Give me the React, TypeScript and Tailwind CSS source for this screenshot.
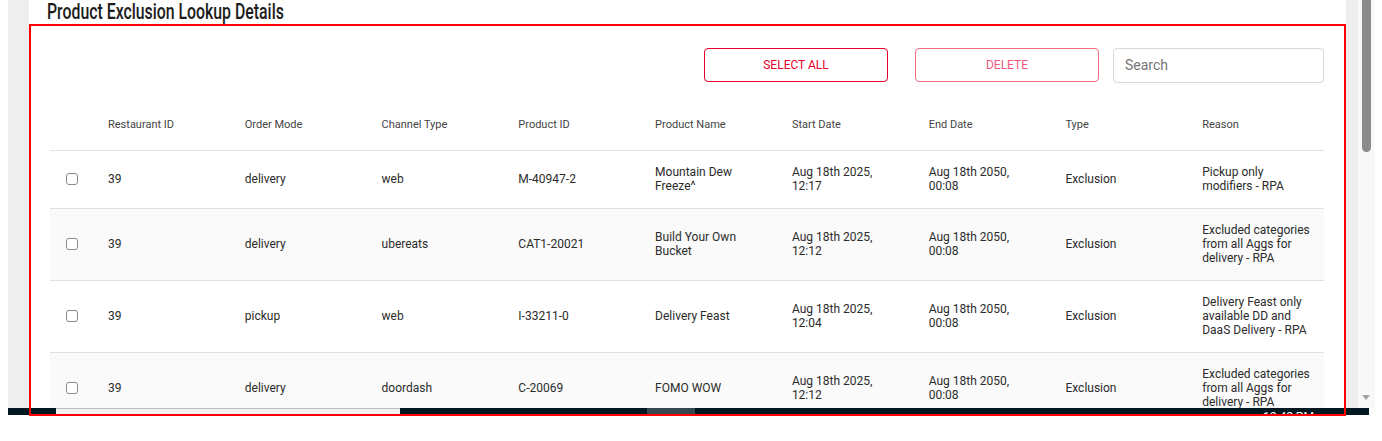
import React from "react";

type Row = {
  rid: string;
  mode: string;
  channel: string;
  pid: string;
  name: string;
  start: string;
  end: string;
  type: string;
  reason: string;
};

const rows: Row[] = [
  {
    rid: "39",
    mode: "delivery",
    channel: "web",
    pid: "M-40947-2",
    name: "Mountain Dew Freeze^",
    start: "Aug 18th 2025, 12:17",
    end: "Aug 18th 2050, 00:08",
    type: "Exclusion",
    reason: "Pickup only modifiers - RPA",
  },
  {
    rid: "39",
    mode: "delivery",
    channel: "ubereats",
    pid: "CAT1-20021",
    name: "Build Your Own Bucket",
    start: "Aug 18th 2025, 12:12",
    end: "Aug 18th 2050, 00:08",
    type: "Exclusion",
    reason: "Excluded categories from all Aggs for delivery - RPA",
  },
  {
    rid: "39",
    mode: "pickup",
    channel: "web",
    pid: "I-33211-0",
    name: "Delivery Feast",
    start: "Aug 18th 2025, 12:04",
    end: "Aug 18th 2050, 00:08",
    type: "Exclusion",
    reason: "Delivery Feast only available DD and DaaS Delivery - RPA",
  },
  {
    rid: "39",
    mode: "delivery",
    channel: "doordash",
    pid: "C-20069",
    name: "FOMO WOW",
    start: "Aug 18th 2025, 12:12",
    end: "Aug 18th 2050, 00:08",
    type: "Exclusion",
    reason: "Excluded categories from all Aggs for delivery - RPA",
  },
];

const headers = [
  "Restaurant ID",
  "Order Mode",
  "Channel Type",
  "Product ID",
  "Product Name",
  "Start Date",
  "End Date",
  "Type",
  "Reason",
];

function Cell({ children }: { children: React.ReactNode }) {
  return <div className="pl-[15px] pr-[14px] leading-[14px]">{children}</div>;
}

export default function App() {
  return (
    <div className="relative w-[1382px] h-[441px] bg-white overflow-hidden font-['Roboto',sans-serif] text-[12px]">
      <div className="flex h-[408px]">
        <div className="w-[8px] bg-white" />
        <div className="flex w-[1350px] bg-[#eeeeee] pl-[21px] pr-[12px]">
          <div className="flex w-[1317px] flex-col overflow-hidden bg-white">
            <div className="h-[24px] shrink-0 pl-[18px]">
              <div className="origin-left scale-x-[0.72] whitespace-nowrap text-[22px] font-medium leading-[24px] text-[#1c1c1c]">
                Product Exclusion Lookup Details
              </div>
            </div>
            <div className="px-[21px] pt-[24px]">
              <div className="flex w-[1274px] items-start justify-end">
                <button className="h-[34px] w-[184px] rounded-[4px] border border-[#e4002b] text-[12px] uppercase text-[#e4002b]">
                  Select All
                </button>
                <button className="ml-[27px] h-[34px] w-[184px] rounded-[4px] border border-[#ef6a84] text-[12px] uppercase text-[#f0587a]">
                  Delete
                </button>
                <div className="ml-[14px] flex h-[35px] w-[211px] items-center rounded-[4px] border border-[#d4d8de] pl-[11px] text-[14px] text-[#757575]">
                  Search
                </div>
              </div>
              <div className="mt-[16px] w-[1274px]">
                <div className="grid h-[52px] grid-cols-[43px_repeat(9,1fr)] items-center border-b border-[#e0e0e0] text-[11px] text-[#444]">
                  <div />
                  {headers.map((h) => (
                    <Cell key={h}>{h}</Cell>
                  ))}
                </div>
                {rows.map((r, i) => (
                  <div
                    key={i}
                    className={`grid grid-cols-[43px_repeat(9,1fr)] items-center border-b border-[#e0e0e0] pt-[14px] pb-[15px] text-[#2b2b2b] ${
                      i % 2 === 1 ? "bg-[#fafafa]" : "bg-white"
                    }`}
                  >
                    <div className="flex justify-center">
                      <span className="block h-[12px] w-[12px] rounded-[3px] border border-[#8a8a8a] bg-white" />
                    </div>
                    <Cell>{r.rid}</Cell>
                    <Cell>{r.mode}</Cell>
                    <Cell>{r.channel}</Cell>
                    <Cell>{r.pid}</Cell>
                    <Cell>{r.name}</Cell>
                    <Cell>{r.start}</Cell>
                    <Cell>{r.end}</Cell>
                    <Cell>{r.type}</Cell>
                    <Cell>{r.reason}</Cell>
                  </div>
                ))}
              </div>
            </div>
          </div>
        </div>
        {/* vertical scrollbar */}
        <div className="relative w-[17px] bg-[#f8f8f8]">
          <div className="ml-[4px] h-[152px] w-[9px] rounded-b-full bg-[#8b8b8b]" />
          <svg
            className="absolute left-[3px] top-[393px]"
            width="10"
            height="8"
            viewBox="0 0 10 8"
          >
            <path d="M1 2 L9 2 L5 7 Z" fill="#a3a3a3" />
          </svg>
        </div>
        <div className="flex-1 bg-white" />
      </div>
      {/* taskbar strip */}
      <div className="ml-[8px] flex h-[7px] w-[1361px] overflow-hidden bg-[#021821]">
        <div className="w-[48px]" />
        <div className="h-[7px] w-[344px] border-t border-[#bdbdbd] bg-[#f1f1f1]" />
        <div className="w-[247px]" />
        <div className="h-[7px] w-[48px] bg-[#37474f]" />
        <div className="w-[568px]" />
        <div className="whitespace-nowrap pt-[3px] text-[12px] leading-[12px] text-white">
          12:42 PM
        </div>
      </div>
      {/* red annotation box */}
      <div className="pointer-events-none absolute left-[29px] top-[24px] h-[392px] w-[1317px] border-2 border-[#ff0000]" />
    </div>
  );
}
